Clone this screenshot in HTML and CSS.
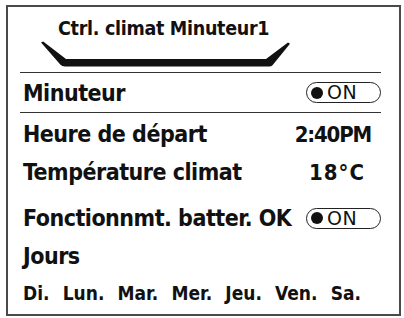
FILE: index.html
```html
<!DOCTYPE html>
<html>
<head>
<meta charset="utf-8">
<link rel="stylesheet" href="styles.css">
</head>
<body>
<div class="screen">
  <div class="header">
    <div class="title">Ctrl. climat Minuteur1</div>
    <svg class="tab" width="256" height="28" viewBox="38 36 256 28">
      <path d="M41 38.6 L43.2 37.4 L66 55 L266 55 L288 38.4 L290 39.8 L272.5 61.2 Q271.5 62.5 269 62.5 L65 62.5 Q62 62.5 60.5 60.8 Z" fill="#111"/>
    </svg>
  </div>
  <div class="rows">
    <div class="row first">
      <span class="label">Minuteur</span>
      <span class="toggle"><span class="dot"></span><span class="on">ON</span></span>
    </div>
    <div class="row second">
      <span class="label">Heure de départ</span>
      <span class="value time">2:40PM</span>
    </div>
    <div class="row">
      <span class="label">Température climat</span>
      <span class="value temp">18°C</span>
    </div>
    <div class="row fourth">
      <span class="label">Fonctionnmt. batter. OK</span>
      <span class="toggle"><span class="dot"></span><span class="on">ON</span></span>
    </div>
    <div class="row">
      <span class="label">Jours</span>
    </div>
    <div class="days">
      <span>Di.</span><span>Lun.</span><span>Mar.</span><span>Mer.</span><span>Jeu.</span><span>Ven.</span><span>Sa.</span>
    </div>
  </div>
</div>
</body>
</html>
```
FILE: styles.css
```css
html, body {
  margin: 0;
  padding: 0;
  background: #fff;
}
body {
  width: 404px;
  height: 318px;
  overflow: hidden;
  font-family: "DejaVu Sans Condensed", "DejaVu Sans", sans-serif;
  color: #111;
}
.screen {
  box-sizing: border-box;
  margin: 5px 0 0 6px;
  width: 395px;
  height: 311px;
  border: 2px solid #4a4a4a;
  padding: 0 18px 0 12px;
  overflow: hidden;
}
.header {
  height: 65px;
}
.title {
  font-weight: bold;
  font-size: 19.5px;
  line-height: 22px;
  padding-top: 11px;
  padding-left: 38px;
  letter-spacing: -0.3px;
}
.tab {
  display: block;
  margin-left: 18px;
  margin-top: 0;
}
.rows {
  border-top: 1px solid #333;
}
.row {
  display: flex;
  justify-content: space-between;
  align-items: center;
  height: 38px;
  padding-left: 3px;
}
.row.first {
  height: 39px;
  border-bottom: 1px solid #333;
}
.row.second {
  margin-top: 2px;
}
.row.fourth {
  margin-top: 8px;
}
.label {
  font-weight: bold;
  font-size: 23px;
  letter-spacing: -0.5px;
}
.value {
  font-weight: bold;
  font-size: 22px;
}
.value.time {
  letter-spacing: -1.2px;
  padding-right: 10px;
}
.value.temp {
  letter-spacing: 1px;
  padding-right: 16px;
}
.toggle {
  box-sizing: border-box;
  width: 75px;
  height: 21px;
  border: 1.5px solid #222;
  border-radius: 11px;
  display: flex;
  align-items: center;
  padding-left: 4px;
  gap: 4px;
}
.dot {
  width: 12px;
  height: 12px;
  border-radius: 50%;
  background: #111;
}
.on {
  font-family: "DejaVu Sans", sans-serif;
  font-size: 19px;
  line-height: 1;
  letter-spacing: 0.5px;
}
.days {
  display: flex;
  justify-content: space-between;
  padding: 0 20px 0 3px;
  font-weight: bold;
  font-size: 19px;
  height: 36px;
  align-items: center;
}
```
